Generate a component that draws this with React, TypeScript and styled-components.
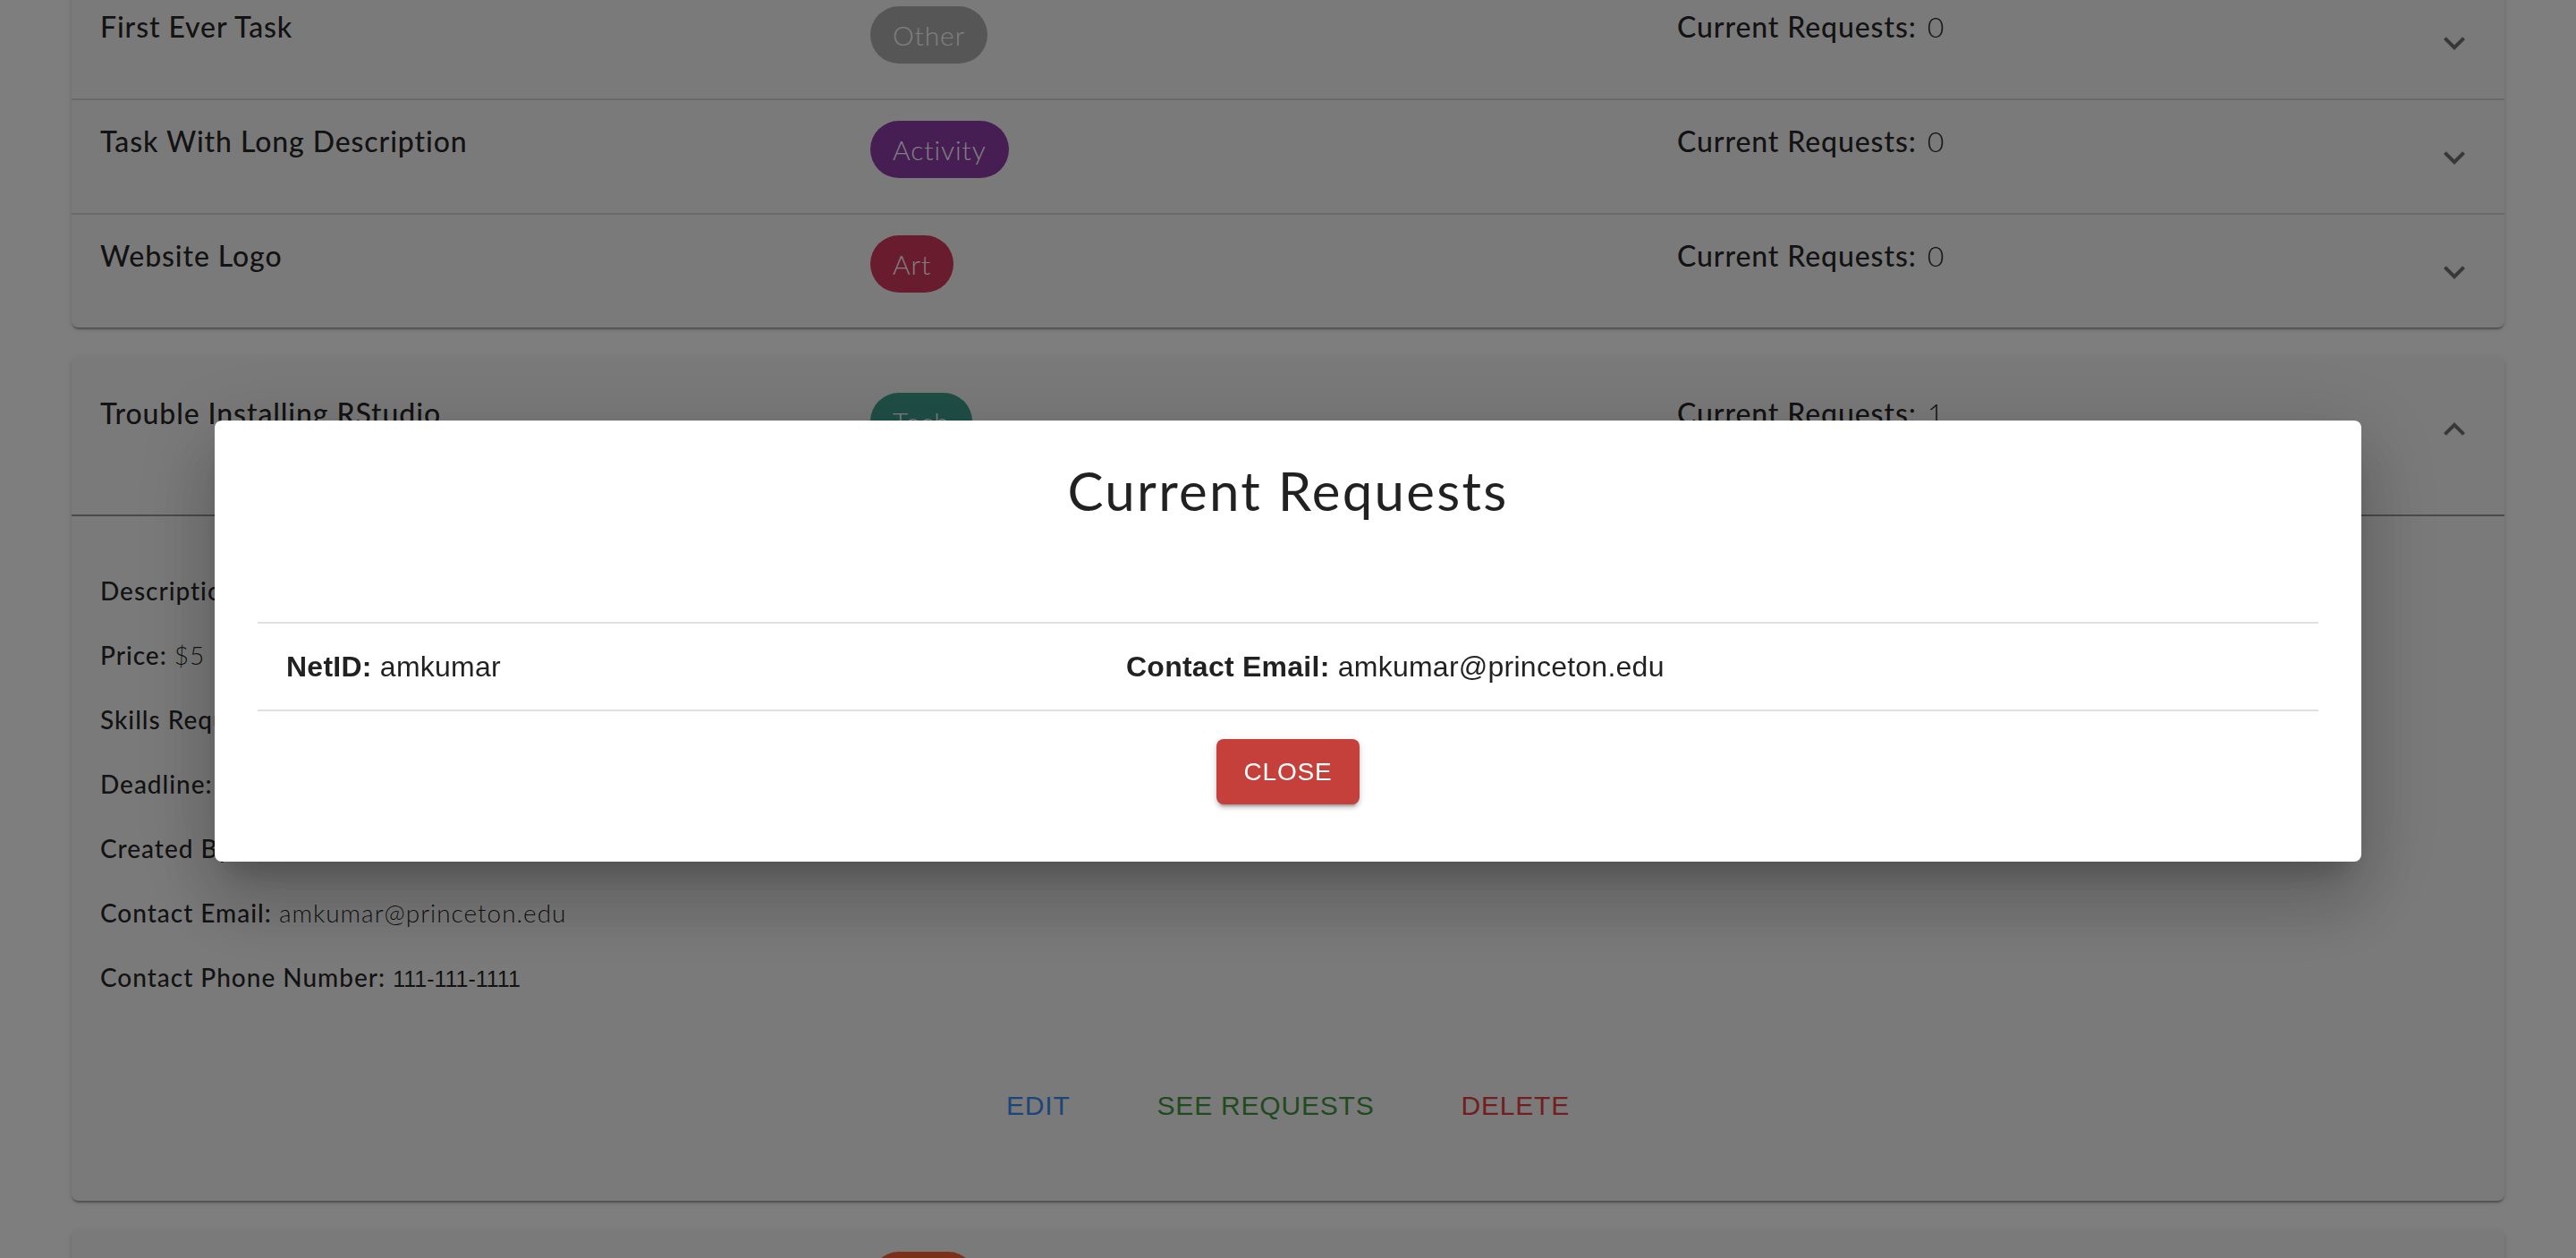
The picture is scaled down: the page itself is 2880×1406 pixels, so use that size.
import React from 'react';
import styled, { createGlobalStyle } from 'styled-components';

const CATEGORY_COLORS: Record<string, string> = {
  Other: '#acacac',
  Activity: '#8c3ca8',
  Art: '#d4385f',
  Tech: '#3e9e8c',
  Food: '#f46032',
};

const TASKS = [
  { id: 0, title: 'First Ever Task', category: 'Other', requests: 0 },
  { id: 1, title: 'Task With Long Description', category: 'Activity', requests: 0 },
  { id: 2, title: 'Website Logo', category: 'Art', requests: 0 },
];

const OPEN_TASK = {
  title: 'Trouble Installing RStudio',
  category: 'Tech',
  requests: 1,
  details: [
    { label: 'Description:', value: 'RStudio keeps crashing on startup after installing.' },
    { label: 'Price:', value: '$5' },
    { label: 'Skills Required:', value: 'R, RStudio' },
    { label: 'Deadline:', value: 'Friday, May 7th 2021' },
    { label: 'Created By:', value: 'amkumar' },
    { label: 'Contact Email:', value: 'amkumar@princeton.edu' },
  ],
  phone: '111-111-1111',
};

const REQUESTS = [{ id: 0, netid: 'amkumar', email: 'amkumar@princeton.edu' }];

const GlobalStyle = createGlobalStyle`
  html, body {
    margin: 0;
    padding: 0;
    overflow: hidden;
    background: #fcfcfc;
  }
`;

const ExpandIcon = ({ up }: { up?: boolean }) => (
  <IconBox $up={up}>
    <svg viewBox="0 0 24 24" width="48" height="48" fill="currentColor">
      <path d="M16.59 8.59 12 13.17 7.41 8.59 6 10l6 6 6-6z" />
    </svg>
  </IconBox>
);

const App = () => {
  return (
    <>
      <GlobalStyle />
      <Page>
        <Card>
          {TASKS.map((task) => (
            <Accordion key={task.id}>
              <Summary>
                <TitleCol>{task.title}</TitleCol>
                <ChipCol>
                  <Chip $color={CATEGORY_COLORS[task.category]}>{task.category}</Chip>
                </ChipCol>
                <RequestsCol>
                  Current Requests:<Count>{task.requests}</Count>
                </RequestsCol>
                <ExpandIcon />
              </Summary>
            </Accordion>
          ))}
        </Card>

        <Card>
          <Accordion>
            <Summary $expanded>
              <TitleCol>{OPEN_TASK.title}</TitleCol>
              <ChipCol>
                <Chip $color={CATEGORY_COLORS[OPEN_TASK.category]}>{OPEN_TASK.category}</Chip>
              </ChipCol>
              <RequestsCol>
                Current Requests:<Count>{OPEN_TASK.requests}</Count>
              </RequestsCol>
              <ExpandIcon up />
            </Summary>
            <Details>
              <DetailList>
                {OPEN_TASK.details.map((d) => (
                  <DetailLine key={d.label}>
                    <DetailLabel>{d.label}</DetailLabel> <DetailValue>{d.value}</DetailValue>
                  </DetailLine>
                ))}
                <DetailLine>
                  <DetailLabel>Contact Phone Number:</DetailLabel> <Phone>{OPEN_TASK.phone}</Phone>
                </DetailLine>
              </DetailList>
              <Actions>
                <ActionButton $color="#3b8cf0">Edit</ActionButton>
                <ActionButton $color="#43963f">See Requests</ActionButton>
                <ActionButton $color="#e53c3c">Delete</ActionButton>
              </Actions>
            </Details>
          </Accordion>
        </Card>

        <Card>
          <Accordion>
            <Summary>
              <TitleCol>Grocery Run</TitleCol>
              <ChipCol>
                <Chip $color={CATEGORY_COLORS.Food}>Food</Chip>
              </ChipCol>
              <RequestsCol>
                Current Requests:<Count>0</Count>
              </RequestsCol>
              <ExpandIcon />
            </Summary>
          </Accordion>
        </Card>
      </Page>

      <Backdrop>
        <Dialog>
          <DialogTitle>Current Requests</DialogTitle>
          {REQUESTS.map((r) => (
            <RequestRow key={r.id}>
              <Cell>
                <b>NetID:</b> {r.netid}
              </Cell>
              <Cell>
                <b>Contact Email:</b> {r.email}
              </Cell>
            </RequestRow>
          ))}
          <DialogActions>
            <CloseButton>Close</CloseButton>
          </DialogActions>
        </Dialog>
      </Backdrop>
    </>
  );
};

export default App;

const Page = styled.main`
  padding: 0 80px;
  margin-top: -18px;
  font-family: Lato, 'Open Sans', sans-serif;
  color: rgba(0, 0, 0, 0.87);
`;

const Card = styled.section`
  background: #f5f5f5;
  border-radius: 8px;
  box-shadow: 0 4px 2px -2px rgba(0, 0, 0, 0.2), 0 2px 2px 0 rgba(0, 0, 0, 0.14),
    0 2px 6px 0 rgba(0, 0, 0, 0.12);
  & + & {
    margin-top: 32px;
  }
`;

const Accordion = styled.div`
  & + & {
    box-shadow: inset 0 2px 0 #d6d6d6;
  }
`;

const Summary = styled.div<{ $expanded?: boolean }>`
  display: flex;
  align-items: flex-start;
  box-sizing: border-box;
  height: ${(p) => (p.$expanded ? 179 : 128)}px;
  padding: ${(p) => (p.$expanded ? 40 : 24)}px 32px 0;
  border-bottom: ${(p) => (p.$expanded ? '2px solid #959595' : 'none')};
  font-size: 32px;
  line-height: 48px;
  letter-spacing: 0.028em;
`;

const TitleCol = styled.div`
  flex: none;
  width: 861px;
  font-weight: 500;
`;

const ChipCol = styled.div`
  flex: none;
  width: 902px;
  padding-top: 1px;
`;

const Chip = styled.span<{ $color: string }>`
  display: inline-flex;
  align-items: center;
  height: 64px;
  padding: 0 25px;
  border-radius: 32px;
  background: ${(p) => p.$color};
  color: #fff;
  font-size: 30px;
  font-weight: 300;
  letter-spacing: 0.03em;
`;

const RequestsCol = styled.div`
  flex: 1;
  font-weight: 500;
`;

const Count = styled.span`
  margin-left: 12px;
  font-weight: 300;
`;

const IconBox = styled.span<{ $up?: boolean }>`
  display: block;
  width: 48px;
  height: 48px;
  margin-top: 18px;
  color: rgba(0, 0, 0, 0.54);
  transform: ${(p) => (p.$up ? 'rotate(180deg)' : 'none')};
  svg {
    display: block;
  }
`;

const Details = styled.div`
  padding: 63px 32px 80px;
`;

const DetailList = styled.div`
  display: flex;
  flex-direction: column;
  gap: 32px;
`;

const DetailLine = styled.div`
  height: 40px;
  font-size: 28px;
  line-height: 40px;
  letter-spacing: 0.035em;
`;

const DetailLabel = styled.span`
  font-weight: 500;
`;

const DetailValue = styled.span`
  font-weight: 300;
`;

const Phone = styled.span`
  font-family: 'Liberation Sans', Arial, sans-serif;
  font-size: 25px;
  line-height: 1;
  letter-spacing: 0;
`;

const Actions = styled.div`
  display: flex;
  justify-content: center;
  gap: 97px;
  margin-top: 98px;
`;

const ActionButton = styled.button<{ $color: string }>`
  background: none;
  border: 0;
  padding: 0;
  font-family: 'Liberation Sans', Arial, sans-serif;
  font-size: 30px;
  line-height: 52px;
  letter-spacing: 0.8px;
  text-transform: uppercase;
  color: ${(p) => p.$color};
  cursor: pointer;
`;

const Backdrop = styled.div`
  position: fixed;
  inset: 0;
  display: flex;
  justify-content: center;
  align-items: flex-start;
  padding-top: 470px;
  box-sizing: border-box;
  background: rgba(0, 0, 0, 0.5);
`;

const Dialog = styled.div`
  width: 2400px;
  box-sizing: border-box;
  padding: 42px 48px 64px;
  background: #fff;
  border-radius: 8px;
  box-shadow: 0 22px 30px -14px rgba(0, 0, 0, 0.2), 0 48px 76px 6px rgba(0, 0, 0, 0.14),
    0 18px 92px 16px rgba(0, 0, 0, 0.12);
`;

const DialogTitle = styled.h2`
  margin: 0 0 111px;
  font-family: Lato, 'Open Sans', sans-serif;
  font-size: 60px;
  font-weight: 400;
  line-height: 72px;
  letter-spacing: 0.038em;
  text-align: center;
  color: rgba(0, 0, 0, 0.87);
`;

const RequestRow = styled.div`
  display: grid;
  grid-template-columns: 939px 1fr;
  border-top: 2px solid #e0e0e0;
  border-bottom: 2px solid #e0e0e0;
`;

const Cell = styled.div`
  padding: 32px;
  font-family: 'Liberation Sans', Arial, sans-serif;
  font-size: 32px;
  line-height: 32px;
  letter-spacing: 0.25px;
  color: rgba(0, 0, 0, 0.87);
`;

const DialogActions = styled.div`
  display: flex;
  justify-content: center;
  margin-top: 31px;
`;

const CloseButton = styled.button`
  height: 73px;
  padding: 0 31px;
  border: 0;
  border-radius: 8px;
  background: #c5403a;
  color: #fff;
  font-family: 'Liberation Sans', Arial, sans-serif;
  font-size: 28px;
  letter-spacing: 0.8px;
  text-transform: uppercase;
  box-shadow: 0 6px 2px -4px rgba(0, 0, 0, 0.2), 0 4px 4px 0 rgba(0, 0, 0, 0.14),
    0 2px 10px 0 rgba(0, 0, 0, 0.12);
  cursor: pointer;
`;
